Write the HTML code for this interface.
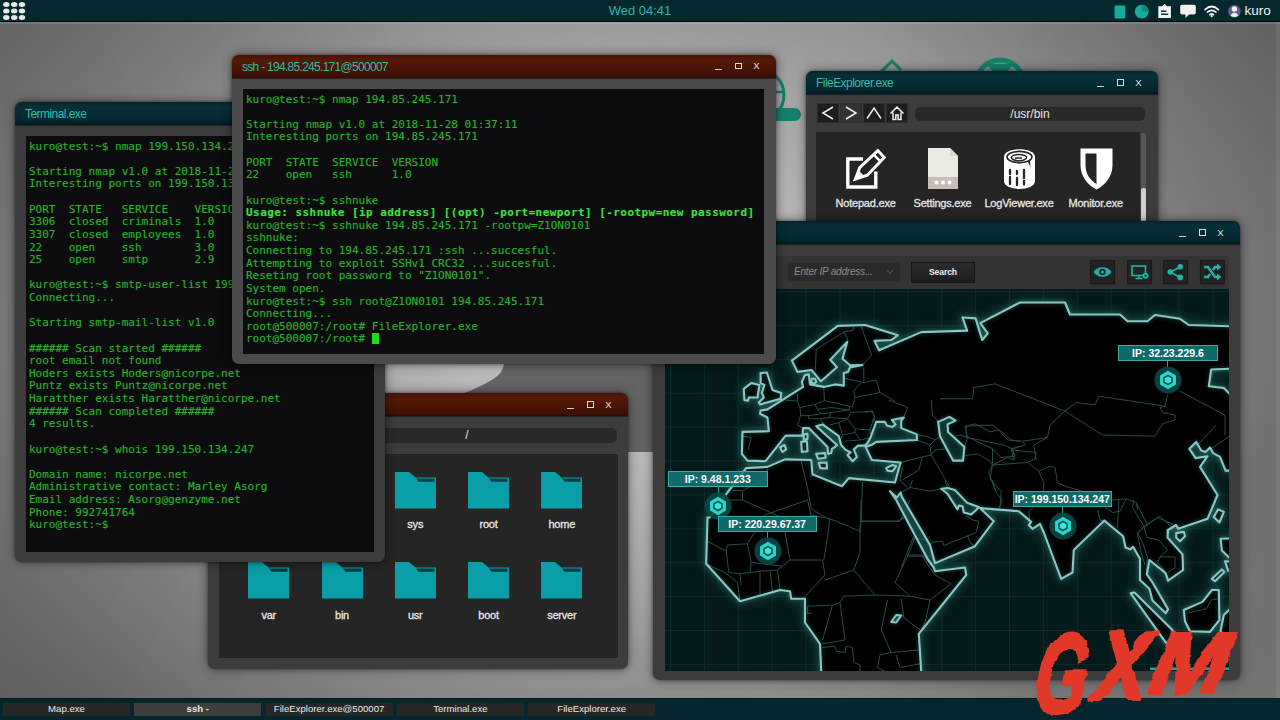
<!DOCTYPE html><html><head><meta charset="utf-8"><title>desktop</title><style>
*{box-sizing:border-box;margin:0;padding:0}
html,body{width:1280px;height:720px;overflow:hidden}
body{position:relative;font-family:"Liberation Sans",sans-serif;background:#6a6a6a;
 background-image:radial-gradient(circle 260px at 1290px 730px,rgba(255,255,255,.15),rgba(255,255,255,0)),linear-gradient(90deg,rgba(0,0,0,0) 68%,rgba(0,0,0,.09) 94%),linear-gradient(270deg,rgba(0,0,0,0) 60%,rgba(0,0,0,.08) 92%),radial-gradient(ellipse 826px 570px at 630px 330px,#c0c0c0 0%,#b9b9b9 21%,#aeaeae 35%,#a0a0a0 49%,#8f8f8f 63%,#828282 74%,#797979 82.5%,#6d6d6d 93%,#686868 100%);}
.abs{position:absolute}
#topbar{position:absolute;left:0;top:0;width:1280px;height:22px;background:#05282f;border-bottom:1px solid #01090b;box-shadow:0 2px 1px rgba(255,255,255,.10);z-index:50}
#clock{position:absolute;left:0;width:1280px;top:3px;text-align:center;color:#2ab5a6;font-size:13px;line-height:16px}
#user{position:absolute;left:1244.5px;top:3.4px;color:#f2f2f2;font-size:13.5px;line-height:16px}
#taskbar{position:absolute;left:0;top:698px;width:1280px;height:22px;background:#05262d;z-index:50;border-top:1px solid #041a1f}
.task{position:absolute;top:4px;height:13px;width:127px;background:#262626;color:#e8e8e8;font-size:9.6px;line-height:12px;text-align:center;white-space:nowrap}
.task.act{background:#3d3d3d;font-weight:bold}
.win{position:absolute;background:#3c3c3c;border-radius:7px;box-shadow:0 0 11px rgba(0,0,0,.48),0 0 3px rgba(0,0,0,.45)}
.tb{position:absolute;left:0;top:0;right:0;height:23px;border-radius:7px 7px 0 0;background:linear-gradient(#02232a,#052f37 18%,#042c34 50%,#03262e 85%,#01181d);color:#33bba8;font-size:12px;line-height:25.2px;padding-left:10px;letter-spacing:-.55px;white-space:nowrap;box-shadow:0 1px 1px rgba(0,0,0,.5)}
.tb.red{background:linear-gradient(#481304,#531906 25%,#4a1405 60%,#3f0f03 88%,#2e0a02)}
.ctl{position:absolute;top:0;right:0;height:23px;width:70px}
.ctl i{position:absolute;display:block}
.ctl .mi{left:9px;top:14.5px;width:6.5px;height:1.4px;background:#d0d0d0}
.ctl .mx{left:29.3px;top:8px;width:6.4px;height:6.8px;border:1.3px solid #dadada}
.ctl .cl{left:47.3px;top:4.5px;font-style:normal;color:#e0e0e0;font-size:9.5px;line-height:14px;letter-spacing:0}
.term{position:absolute;background:#0c0c0e;color:#2ab12a;font-family:"DejaVu Sans Mono","Liberation Mono",monospace;font-size:11px;line-height:12.63px;white-space:pre;overflow:hidden;padding:4.6px 0 0 3px;text-shadow:0 0 1.5px rgba(40,170,40,.35)}
.term b{color:#39e239;font-weight:bold;letter-spacing:.44px}
.cur{display:inline-block;width:7px;height:11px;background:#19e019;vertical-align:-2px}
.addr{position:absolute;background:#292929;border-radius:5px;color:#e4e4e4;font-size:12px;text-align:center}
.panel{position:absolute;background:#252525}
.lbl{position:absolute;width:90px;text-align:center;color:#e6e6e6;font-size:11px;line-height:13px;white-space:nowrap;letter-spacing:-.22px;-webkit-text-stroke:.3px #e6e6e6}
.nb{position:absolute;top:33px;width:20px;height:18px;background:#1e1e1e;box-shadow:0 0 0 1px #2c2c2c}
.iplabel{position:absolute;height:16px;background:rgba(18,120,120,.88);border:1px solid #3aa9a4;color:#fff;font-weight:bold;font-size:10.5px;line-height:14px;text-align:center;white-space:nowrap}
.mbtn{position:absolute;top:40px;width:23px;height:22px;background:#222;box-shadow:0 0 0 1px #1a1a1a,0 1px 2px rgba(0,0,0,.6)}
</style></head><body>
<svg class="abs" style="left:400px;top:330px" width="280" height="130" viewBox="400 330 280 130"><path d="M507,330 Q507,362 501,372 Q496,380 467,392 L420,412 V452 H680 V330 Z" fill="#646464"/></svg>
<div class="abs" style="left:1276px;top:22px;width:4px;height:676px;background:rgba(255,255,255,.07)"></div>
<svg class="abs" style="left:760px;top:40px" width="300" height="100" viewBox="760 40 300 100">
<circle cx="758" cy="95" r="26" fill="none" stroke="#14806c" stroke-width="3"/>
<path d="M732,92 H784" stroke="#14806c" stroke-width="2.5"/>
<rect x="740" y="108" width="61" height="13" rx="6.5" fill="#14806c"/>
<path d="M862,72 h14 v5 h-14z" fill="#14806c"/>
<path d="M881,72 l11,-11 l9,9" fill="none" stroke="#14806c" stroke-width="3"/>
<circle cx="1000" cy="84" r="24" fill="none" stroke="#14806c" stroke-width="5"/>
<path d="M986,64 h28 l-7,8 h-14z" fill="#14806c"/>
</svg>
<div class="win" style="left:806px;top:71px;width:352px;height:200px">
<div class="tb">FileExplorer.exe<div class="ctl"><i class="mi"></i><i class="mx"></i><i class="cl">X</i></div></div>
<svg class="nb" style="left:11.5px;background:#1e1e1e" viewBox="0 0 20 18"><path d="M15,3 L5,9 L15,15" fill="none" stroke="#f0f0f0" stroke-width="1.5"/></svg>
<svg class="nb" style="left:34.5px;background:#333" viewBox="0 0 20 18"><path d="M5,3 L15,9 L5,15" fill="none" stroke="#f0f0f0" stroke-width="1.5"/></svg>
<svg class="nb" style="left:57.5px;background:#1e1e1e" viewBox="0 0 20 18"><path d="M3,14.5 L10,4 L17,14.5" fill="none" stroke="#f0f0f0" stroke-width="1.5"/></svg>
<svg class="nb" style="left:80.5px;background:#1e1e1e" viewBox="0 0 20 18"><path d="M3.5,9.5 L10,3 L16.5,9.5 M6,8.5 V15.5 H8.8 V11 H11.2 V15.5 H14 V8.5" fill="none" stroke="#f0f0f0" stroke-width="1.5"/></svg>
<div class="addr" style="left:109px;top:35.5px;width:230px;height:14px;line-height:14px">/usr/bin</div>
<div class="panel" style="left:10px;top:61px;width:324px;height:120px"></div>
<div class="abs" style="left:335px;top:62px;width:5px;height:110px;background:#555;border-radius:2px"></div>
<div class="abs" style="left:335px;top:117px;width:5px;height:50px;background:#d0d0d0;border-radius:2px"></div>
<svg class="abs" style="left:39px;top:77px" width="44" height="44" viewBox="0 0 44 44">
<path d="M18,11 H2.8 V39 H30.8 V23.5" fill="none" stroke="#fff" stroke-width="3.4"/>
<path d="M10.3,31.2 L14.8,19.5 L32.8,2.6 L39.2,9.6 L22.3,27.3 Z" fill="#252525" stroke="#fff" stroke-width="3" stroke-linejoin="miter"/>
<path d="M28.7,6.6 L35.6,13.6" stroke="#fff" stroke-width="2.6"/>
<path d="M9.5,32.2 L13.8,22.5 L19.6,28.6 Z" fill="#fff"/>
</svg>
<div class="lbl" style="left:14.6px;top:125.6px">Notepad.exe</div>
<svg class="abs" style="left:122px;top:77.4px" width="30" height="41" viewBox="0 0 30 41">
<path d="M0,0 H22 L30,8 V41 H0 Z" fill="#eceae3"/><path d="M22,0 L30,8 H22 Z" fill="#d9d6cc"/>
<rect x="0" y="29" width="30" height="12" fill="#c9bdb9"/>
<circle cx="8.5" cy="34.5" r="2" fill="#fff"/><circle cx="15" cy="34.5" r="2" fill="#fff"/><circle cx="21.5" cy="34.5" r="2" fill="#fff"/>
</svg>
<div class="lbl" style="left:91.5px;top:125.6px">Settings.exe</div>
<svg class="abs" style="left:197px;top:77px" width="33" height="42" viewBox="0 0 33 42">
<path d="M1,9 C1,-1.5 32,-1.5 32,9 V33 C32,43.5 1,43.5 1,33 Z" fill="#fff"/>
<ellipse cx="16.5" cy="9" rx="12.5" ry="5.6" fill="none" stroke="#252525" stroke-width="1.6"/>
<ellipse cx="16" cy="9.6" rx="7.6" ry="3.1" fill="none" stroke="#252525" stroke-width="1.5"/>
<path d="M12,10 h7" stroke="#252525" stroke-width="1.5"/>
<path d="M25,14 l2,-3 l0.5,8z" fill="#252525"/>
<path d="M7,22 v4 M7,29 v7 M14,23 v3 M14,30 v7 M21,22 v8 M21,33 v3.5" stroke="#252525" stroke-width="2.3" stroke-linecap="round"/>
</svg>
<div class="lbl" style="left:168px;top:125.6px">LogViewer.exe</div>
<svg class="abs" style="left:273.5px;top:76.5px" width="33" height="42" viewBox="0 0 33 42">
<path d="M0.5,0.5 H32.5 V17 C32.5,29 25,37 16.5,41.5 C8,37 0.5,29 0.5,17 Z" fill="#fff"/>
<path d="M5.5,5.5 H16.5 V36 C10,32 5.5,26 5.5,17 Z" fill="#252525"/>
</svg>
<div class="lbl" style="left:244.7px;top:125.6px">Monitor.exe</div>
</div>
<div class="win" style="left:208px;top:393px;width:420px;height:276px">
<div class="tb red"><div class="ctl"><i class="mi"></i><i class="mx"></i><i class="cl">X</i></div></div>
<div class="addr" style="left:109.3px;top:35px;width:299.4px;height:14.5px;line-height:14px">/</div>
<div class="panel" style="left:10.5px;top:61px;width:399.5px;height:204px"></div>
<svg class="abs" style="left:40.2px;top:78.7px" width="41" height="37" viewBox="0 0 41 37"><path d="M0,0 H14 L20.5,5.5 H41 V36.5 H0 Z" fill="#0a9fa8"/><path d="M21,6.5 H39.5 V9.8 H23.5 Z" fill="#063c42"/></svg>
<div class="lbl" style="left:15.75px;top:125.2px"></div>
<svg class="abs" style="left:113.5px;top:78.7px" width="41" height="37" viewBox="0 0 41 37"><path d="M0,0 H14 L20.5,5.5 H41 V36.5 H0 Z" fill="#0a9fa8"/><path d="M21,6.5 H39.5 V9.8 H23.5 Z" fill="#063c42"/></svg>
<div class="lbl" style="left:89px;top:125.2px"></div>
<svg class="abs" style="left:186.8px;top:78.7px" width="41" height="37" viewBox="0 0 41 37"><path d="M0,0 H14 L20.5,5.5 H41 V36.5 H0 Z" fill="#0a9fa8"/><path d="M21,6.5 H39.5 V9.8 H23.5 Z" fill="#063c42"/></svg>
<div class="lbl" style="left:162.25px;top:125.2px">sys</div>
<svg class="abs" style="left:260.0px;top:78.7px" width="41" height="37" viewBox="0 0 41 37"><path d="M0,0 H14 L20.5,5.5 H41 V36.5 H0 Z" fill="#0a9fa8"/><path d="M21,6.5 H39.5 V9.8 H23.5 Z" fill="#063c42"/></svg>
<div class="lbl" style="left:235.5px;top:125.2px">root</div>
<svg class="abs" style="left:333.2px;top:78.7px" width="41" height="37" viewBox="0 0 41 37"><path d="M0,0 H14 L20.5,5.5 H41 V36.5 H0 Z" fill="#0a9fa8"/><path d="M21,6.5 H39.5 V9.8 H23.5 Z" fill="#063c42"/></svg>
<div class="lbl" style="left:308.75px;top:125.2px">home</div>
<svg class="abs" style="left:40.2px;top:169px" width="41" height="37" viewBox="0 0 41 37"><path d="M0,0 H14 L20.5,5.5 H41 V36.5 H0 Z" fill="#0a9fa8"/><path d="M21,6.5 H39.5 V9.8 H23.5 Z" fill="#063c42"/></svg>
<div class="lbl" style="left:15.75px;top:215.5px">var</div>
<svg class="abs" style="left:113.5px;top:169px" width="41" height="37" viewBox="0 0 41 37"><path d="M0,0 H14 L20.5,5.5 H41 V36.5 H0 Z" fill="#0a9fa8"/><path d="M21,6.5 H39.5 V9.8 H23.5 Z" fill="#063c42"/></svg>
<div class="lbl" style="left:89px;top:215.5px">bin</div>
<svg class="abs" style="left:186.8px;top:169px" width="41" height="37" viewBox="0 0 41 37"><path d="M0,0 H14 L20.5,5.5 H41 V36.5 H0 Z" fill="#0a9fa8"/><path d="M21,6.5 H39.5 V9.8 H23.5 Z" fill="#063c42"/></svg>
<div class="lbl" style="left:162.25px;top:215.5px">usr</div>
<svg class="abs" style="left:260.0px;top:169px" width="41" height="37" viewBox="0 0 41 37"><path d="M0,0 H14 L20.5,5.5 H41 V36.5 H0 Z" fill="#0a9fa8"/><path d="M21,6.5 H39.5 V9.8 H23.5 Z" fill="#063c42"/></svg>
<div class="lbl" style="left:235.5px;top:215.5px">boot</div>
<svg class="abs" style="left:333.2px;top:169px" width="41" height="37" viewBox="0 0 41 37"><path d="M0,0 H14 L20.5,5.5 H41 V36.5 H0 Z" fill="#0a9fa8"/><path d="M21,6.5 H39.5 V9.8 H23.5 Z" fill="#063c42"/></svg>
<div class="lbl" style="left:308.75px;top:215.5px">server</div>
</div>
<div class="win" style="left:15px;top:102px;width:370px;height:460px">
<div class="tb">Terminal.exe</div>
<div class="term" style="left:11px;top:34px;width:348px;height:416px">kuro@test:~$ nmap 199.150.134.247

Starting nmap v1.0 at 2018-11-28 01:36:02
Interesting ports on 199.150.134.247

PORT  STATE   SERVICE    VERSION
3306  closed  criminals  1.0
3307  closed  employees  1.0
22    open    ssh        3.0
25    open    smtp       2.9

kuro@test:~$ smtp-user-list 199.150.134.247
Connecting...

Starting smtp-mail-list v1.0

###### Scan started ######
root email not found
Hoders exists Hoders@nicorpe.net
Puntz exists Puntz@nicorpe.net
Haratther exists Haratther@nicorpe.net
###### Scan completed ######
4 results.

kuro@test:~$ whois 199.150.134.247

Domain name: nicorpe.net
Administrative contact: Marley Asorg
Email address: Asorg@genzyme.net
Phone: 992741764
kuro@test:~$ </div>
</div>
<div class="win" style="left:653px;top:221px;width:587px;height:459px">
<div class="tb"><div class="ctl"><i class="mi"></i><i class="mx"></i><i class="cl">X</i></div></div>
<div class="abs" style="left:8px;top:35px;width:568px;height:33px;background:#343434"></div>
<div class="abs" style="left:135px;top:42px;width:112px;height:18px;background:#2a2a2a;border-radius:3px;color:#8a8a8a;font-style:italic;font-size:10px;line-height:18px;padding-left:6px;letter-spacing:-.2px">Enter IP address...</div>
<svg class="abs" style="left:233px;top:48px" width="8" height="6" viewBox="0 0 8 6"><path d="M1,1 L4,4.5 L7,1" fill="none" stroke="#4a4a4a" stroke-width="1.3"/></svg>
<div class="abs" style="left:259px;top:41.5px;width:62px;height:19px;background:linear-gradient(#2c2c2c,#1c1c1c);box-shadow:0 0 0 1px #161616;color:#f0f0f0;font-size:8.6px;line-height:19px;text-align:center;font-weight:bold;letter-spacing:-.1px">Search</div>
<svg class="mbtn" style="left:437.8px" viewBox="0 0 23 22"><path d="M2.5,11 C6,4.6 17,4.6 20.5,11 C17,17.4 6,17.4 2.5,11 Z" fill="#1fb5a6"/><circle cx="11.5" cy="11" r="3.3" fill="#222"/><circle cx="11.5" cy="11" r="1.5" fill="#1fb5a6"/></svg>
<svg class="mbtn" style="left:474.5px" viewBox="0 0 23 22"><rect x="4" y="5" width="13.5" height="9.5" fill="none" stroke="#1fb5a6" stroke-width="1.6"/><path d="M7.5,17.5 h7 M11,14.5 v3" stroke="#1fb5a6" stroke-width="1.5"/><circle cx="17.5" cy="14.8" r="3" fill="#1fb5a6"/><circle cx="17.5" cy="14.8" r="1.1" fill="#222"/></svg>
<svg class="mbtn" style="left:511.4px" viewBox="0 0 23 22"><path d="M6.5,11 L16,6 M6.5,11 L16,16.5" stroke="#1fb5a6" stroke-width="1.7"/><circle cx="6.3" cy="11" r="2.8" fill="#1fb5a6"/><circle cx="16.2" cy="5.8" r="2.8" fill="#1fb5a6"/><circle cx="16.2" cy="16.4" r="2.8" fill="#1fb5a6"/></svg>
<svg class="mbtn" style="left:547.6px" viewBox="0 0 23 22"><path d="M3,6 H7 L14,16 H17 M3,16 H7 L9,13 M12,9 L14,6 H17" fill="none" stroke="#1fb5a6" stroke-width="2.3"/><path d="M16,2.5 L20.5,6 L16,9.5 Z M16,12.5 L20.5,16 L16,19.5 Z" fill="#1fb5a6"/></svg>
<svg class="abs" style="left:12px;top:68px" width="564" height="382" viewBox="665 289 564 382">
<defs><filter id="gl" x="-5%" y="-5%" width="110%" height="110%"><feGaussianBlur stdDeviation="2.2"/></filter><filter id="gl2" x="-5%" y="-5%" width="110%" height="110%"><feGaussianBlur stdDeviation="5"/></filter></defs>
<rect x="665" y="289" width="564" height="382" fill="#051a1a"/>
<path d="M670.5,289 V671 M704.4,289 V671 M738.3,289 V671 M772.2,289 V671 M806.1,289 V671 M840,289 V671 M873.9,289 V671 M907.8,289 V671 M941.7,289 V671 M975.6,289 V671 M1009.5,289 V671 M1043.4,289 V671 M1077.3,289 V671 M1111.2,289 V671 M1145.1,289 V671 M1179,289 V671 M1212.9,289 V671 M665,291.5 H1229 M665,325.4 H1229 M665,359.3 H1229 M665,393.2 H1229 M665,427.1 H1229 M665,461 H1229 M665,494.9 H1229 M665,528.8 H1229 M665,562.7 H1229 M665,596.6 H1229 M665,630.5 H1229 M665,664.4 H1229" stroke="#0b2c2b" stroke-width="1" fill="none"/>
<path d="M765.6,461.2 L747.5,460.6 L741.9,453.8 L742.5,431.9 L768.8,431.2 L767.5,417.5 L760,413.8 L760.6,410.6 L767.5,409.4 L803.1,386.9 L801.9,381.9 L805,375 L808.8,374.4 L810,384.4 L823.8,386.9 L835,384.4 L843.8,385.6 L843.8,373.1 L848.1,371.9 L850,367.5 L862.5,365 L850,365.3 L842.5,358.8 L847.2,341.9 L830.3,359.7 L836.9,367.2 L820.9,381.3 L811.6,370 L797.5,371.9 L791.9,360.6 L837.8,325.9 L865,325 L897.8,335.3 L891.3,340 L874.4,340.9 L879.1,350.3 L921.3,332.1 L967.2,330.6 L962.5,317.5 L975.6,318.4 L982.2,340 L987.8,333.4 L980.3,323.1 L1020,302.5 L1065,302.5 L1070,314.5 L1120,314.5 L1127.5,321.2 L1147.5,321.2 L1155,315 L1180,318.8 L1188.8,325 L1229.5,326.2 L1250,326 L1250,368.8 L1229.5,368.8 L1211.2,369.5 L1208.8,386.2 L1223.8,388 L1229.5,393.8 L1250,394 L1250,470.6 L1229.1,470.6 L1225.6,470.6 L1220,456.9 L1213.1,453.1 L1210,447.5 L1205.6,451.9 L1201.2,450.6 L1196.2,441.9 L1189.4,448.8 L1195.6,458.1 L1207.5,456.2 L1200,466.9 L1217.5,495 L1207.5,518.8 L1178.1,528.8 L1176.2,525 L1168.1,530 L1167.5,537.5 L1182.5,554.4 L1183.1,570 L1168.1,580.6 L1165.6,573.1 L1149.4,560 L1146.9,574.4 L1152.5,582.5 L1168.1,609.4 L1165.6,613.1 L1152.5,600.6 L1149.4,588.8 L1140,580 L1140,558.8 L1133.1,546.9 L1130,549.4 L1125.6,547.5 L1123.1,536.2 L1104.4,520.6 L1073.8,550 L1072.5,572.5 L1061.2,578.8 L1043.8,532.5 L1040,523.8 L1032.5,528.8 L1028.8,525 L1031.2,521.9 L1018.8,511.2 L980,508.1 L993.8,521.2 L975,546.2 L935,563.1 L930,545 L901.9,496.9 L900.6,492.5 L896.9,497.5 L890,491.2 L896.2,500 L928.1,560 L933.8,567.5 L935,571.2 L965,567.5 L966.2,575 L918.8,633.8 L921.2,671.2 L921,700 L821,700 L821.2,671.2 L820,643.8 L805,622.5 L805,598.8 L791.2,598.8 L790,591.2 L780,590 L740,601.2 L706.2,563.8 L707.5,517.5 L710,517.5 L727.5,492.5 L746.2,468.1 L767.5,466.9 L785,459.4 L811.2,460 L812.5,474.4 L841.9,486.2 L848.8,478.1 L895,482.5 L900.6,462.5 L871.9,460 L865.6,446.9 L872.5,444.4 L876.2,441.9 L916.9,440 L916.9,434.4 L901.2,428.1 L901.2,420.6 L903.8,417.5 L891.9,420 L895.6,424.4 L892.5,426.9 L886.9,425.6 L885,421.9 L876.2,421.9 L870.6,437.5 L867.5,443.1 L865,445.6 L858.1,445.6 L853.8,449.4 L856.9,456.9 L852.5,461.2 L847.5,455 L850.6,452.5 L845,449.4 L841.2,445 L838.8,436.2 L822.5,424.4 L816.2,426.2 L836.9,445 L835,446.9 L831.9,448.8 L831.2,453.1 L828.1,453.8 L827.5,446.9 L808.8,428.1 L803.1,428.1 L802.5,435.6 L785.6,435.6 Z M743.8,388.8 L751.2,383.1 L759.4,385 L757.5,397.5 L748.8,397.5 L748.1,400.6 L744.4,400 Z M760.6,373.1 L766.9,372.5 L772.5,390 L781.2,393.1 L780.6,398.8 L760,404.4 L758.8,402.5 L763.8,397.5 L761.9,392.5 L764.4,385 L760.6,383.1 Z M811.9,378.8 L815,378.8 L816.2,381.9 L813.8,383.8 L811.2,381.9 Z M801.2,441.9 L806.9,441.2 L807.5,451.2 L801.9,451.9 Z M803.8,434.4 L807.5,433.8 L807.5,438.8 L803.8,440 Z M780,447.5 L784.4,445 L786.2,449.4 L782.5,451.9 Z M816.2,453.8 L825.2,453.1 L825.6,457.8 L818.1,458.8 Z M818.8,462.8 L826.6,462.5 L826.9,468.5 L820.4,468.1 Z M886.2,468.1 L892.5,465 L896.2,466.2 L892.5,471.2 L887.5,470.6 Z M1218.1,509.4 L1223.8,511.9 L1219.4,522.5 L1213.8,516.9 Z M1176.2,533.1 L1183.8,531.9 L1185,536.2 L1180,541.2 L1176.2,537.5 Z M1220.6,538.8 L1240,538.1 L1240,557.5 L1229.1,557.5 L1221.9,550.6 Z M1225,561.2 L1240,562.5 L1240,571.9 L1228.1,570.6 Z M1211.9,578.8 L1221.9,569.4 L1224.4,571.9 L1215,581.2 Z M1130.6,593.1 L1134.4,592.5 L1172.5,630 L1172.5,638.8 L1166.2,643.1 Z M1183.8,610 L1202.5,601.9 L1211.9,590 L1218.8,590 L1219.4,620 L1210,631.9 L1190,631.2 L1185,621.2 Z M1240,602.5 L1229.1,610 L1223.8,615 L1220.6,630.6 L1221.9,638.8 L1240,640 Z M938.1,421.9 L949.4,416.9 L955.6,420.6 L947.5,424.4 L948.1,431.9 L964.4,446.9 L963.1,460.6 L953.1,460.6 L940,436.2 Z M941.2,488.8 L947.5,488.1 L955,490 L967.5,503.1 L978.8,506.9 L976.2,510 L971.2,514.4 L963.8,512.5 L962.5,506.2 L958.8,505.6 L957.5,509.4 L947.5,493.8 Z M891.2,622 L896.2,615 L901.2,615.5 L896.2,622.5 Z" fill="none" stroke="#2f8f8a" stroke-width="8" stroke-linejoin="round" opacity=".24" filter="url(#gl2)"/>
<path d="M765.6,461.2 L747.5,460.6 L741.9,453.8 L742.5,431.9 L768.8,431.2 L767.5,417.5 L760,413.8 L760.6,410.6 L767.5,409.4 L803.1,386.9 L801.9,381.9 L805,375 L808.8,374.4 L810,384.4 L823.8,386.9 L835,384.4 L843.8,385.6 L843.8,373.1 L848.1,371.9 L850,367.5 L862.5,365 L850,365.3 L842.5,358.8 L847.2,341.9 L830.3,359.7 L836.9,367.2 L820.9,381.3 L811.6,370 L797.5,371.9 L791.9,360.6 L837.8,325.9 L865,325 L897.8,335.3 L891.3,340 L874.4,340.9 L879.1,350.3 L921.3,332.1 L967.2,330.6 L962.5,317.5 L975.6,318.4 L982.2,340 L987.8,333.4 L980.3,323.1 L1020,302.5 L1065,302.5 L1070,314.5 L1120,314.5 L1127.5,321.2 L1147.5,321.2 L1155,315 L1180,318.8 L1188.8,325 L1229.5,326.2 L1250,326 L1250,368.8 L1229.5,368.8 L1211.2,369.5 L1208.8,386.2 L1223.8,388 L1229.5,393.8 L1250,394 L1250,470.6 L1229.1,470.6 L1225.6,470.6 L1220,456.9 L1213.1,453.1 L1210,447.5 L1205.6,451.9 L1201.2,450.6 L1196.2,441.9 L1189.4,448.8 L1195.6,458.1 L1207.5,456.2 L1200,466.9 L1217.5,495 L1207.5,518.8 L1178.1,528.8 L1176.2,525 L1168.1,530 L1167.5,537.5 L1182.5,554.4 L1183.1,570 L1168.1,580.6 L1165.6,573.1 L1149.4,560 L1146.9,574.4 L1152.5,582.5 L1168.1,609.4 L1165.6,613.1 L1152.5,600.6 L1149.4,588.8 L1140,580 L1140,558.8 L1133.1,546.9 L1130,549.4 L1125.6,547.5 L1123.1,536.2 L1104.4,520.6 L1073.8,550 L1072.5,572.5 L1061.2,578.8 L1043.8,532.5 L1040,523.8 L1032.5,528.8 L1028.8,525 L1031.2,521.9 L1018.8,511.2 L980,508.1 L993.8,521.2 L975,546.2 L935,563.1 L930,545 L901.9,496.9 L900.6,492.5 L896.9,497.5 L890,491.2 L896.2,500 L928.1,560 L933.8,567.5 L935,571.2 L965,567.5 L966.2,575 L918.8,633.8 L921.2,671.2 L921,700 L821,700 L821.2,671.2 L820,643.8 L805,622.5 L805,598.8 L791.2,598.8 L790,591.2 L780,590 L740,601.2 L706.2,563.8 L707.5,517.5 L710,517.5 L727.5,492.5 L746.2,468.1 L767.5,466.9 L785,459.4 L811.2,460 L812.5,474.4 L841.9,486.2 L848.8,478.1 L895,482.5 L900.6,462.5 L871.9,460 L865.6,446.9 L872.5,444.4 L876.2,441.9 L916.9,440 L916.9,434.4 L901.2,428.1 L901.2,420.6 L903.8,417.5 L891.9,420 L895.6,424.4 L892.5,426.9 L886.9,425.6 L885,421.9 L876.2,421.9 L870.6,437.5 L867.5,443.1 L865,445.6 L858.1,445.6 L853.8,449.4 L856.9,456.9 L852.5,461.2 L847.5,455 L850.6,452.5 L845,449.4 L841.2,445 L838.8,436.2 L822.5,424.4 L816.2,426.2 L836.9,445 L835,446.9 L831.9,448.8 L831.2,453.1 L828.1,453.8 L827.5,446.9 L808.8,428.1 L803.1,428.1 L802.5,435.6 L785.6,435.6 Z M743.8,388.8 L751.2,383.1 L759.4,385 L757.5,397.5 L748.8,397.5 L748.1,400.6 L744.4,400 Z M760.6,373.1 L766.9,372.5 L772.5,390 L781.2,393.1 L780.6,398.8 L760,404.4 L758.8,402.5 L763.8,397.5 L761.9,392.5 L764.4,385 L760.6,383.1 Z M811.9,378.8 L815,378.8 L816.2,381.9 L813.8,383.8 L811.2,381.9 Z M801.2,441.9 L806.9,441.2 L807.5,451.2 L801.9,451.9 Z M803.8,434.4 L807.5,433.8 L807.5,438.8 L803.8,440 Z M780,447.5 L784.4,445 L786.2,449.4 L782.5,451.9 Z M816.2,453.8 L825.2,453.1 L825.6,457.8 L818.1,458.8 Z M818.8,462.8 L826.6,462.5 L826.9,468.5 L820.4,468.1 Z M886.2,468.1 L892.5,465 L896.2,466.2 L892.5,471.2 L887.5,470.6 Z M1218.1,509.4 L1223.8,511.9 L1219.4,522.5 L1213.8,516.9 Z M1176.2,533.1 L1183.8,531.9 L1185,536.2 L1180,541.2 L1176.2,537.5 Z M1220.6,538.8 L1240,538.1 L1240,557.5 L1229.1,557.5 L1221.9,550.6 Z M1225,561.2 L1240,562.5 L1240,571.9 L1228.1,570.6 Z M1211.9,578.8 L1221.9,569.4 L1224.4,571.9 L1215,581.2 Z M1130.6,593.1 L1134.4,592.5 L1172.5,630 L1172.5,638.8 L1166.2,643.1 Z M1183.8,610 L1202.5,601.9 L1211.9,590 L1218.8,590 L1219.4,620 L1210,631.9 L1190,631.2 L1185,621.2 Z M1240,602.5 L1229.1,610 L1223.8,615 L1220.6,630.6 L1221.9,638.8 L1240,640 Z" fill="#000"/>
<path d="M938.1,421.9 L949.4,416.9 L955.6,420.6 L947.5,424.4 L948.1,431.9 L964.4,446.9 L963.1,460.6 L953.1,460.6 L940,436.2 Z M941.2,488.8 L947.5,488.1 L955,490 L967.5,503.1 L978.8,506.9 L976.2,510 L971.2,514.4 L963.8,512.5 L962.5,506.2 L958.8,505.6 L957.5,509.4 L947.5,493.8 Z M891.2,622 L896.2,615 L901.2,615.5 L896.2,622.5 Z" fill="#082726"/>
<g id="borders" fill="none" stroke="#284d4a" stroke-width="1" stroke-linejoin="round"><path d="M807.5,500 L811.2,515 L830,518.8 L827.5,537.5 L823.8,560 M706.2,563.8 L713.8,567.5 L725,572.5 L737.5,582.5 L740,601.2 M707.5,541.2 L726.2,551.2 L727.5,545 L747.5,543.8 M726.2,551.2 L728.8,572.5 L740,573.8 L741.2,585 M750,572.5 L751.2,562.5 L782.5,566.2 L790,560 L822.5,560 M760,571.2 L760,593.8 M770,571.2 L772.5,591.2 M777.5,570 L780,590 M740,573.8 L750,572.5 L760,571.2 L777.5,570 L782.5,566.2 M822.5,560 L825,575 L803.8,597.5 M830,518.8 L860,531.2 L861.2,500 M860,531.2 L860,552.5 L853.8,570 L825,580 M861.2,521.2 L900,521.2 L910,500 M853.8,570 L875,595 L843.8,596.2 L840,602.5 L832.5,605 L807.5,606.2 M875,595 L910,596.2 L895,582.5 L907.5,556.2 L922.5,556.2 L928.8,566.2 M907.5,556.2 L915,537.5 L925,540 M910,596.2 L930,600 L951.2,583.8 L935,575 L928.8,566.2 M930,600 L925,622.5 L918.8,633.8 M887.5,600 L881.2,630 L891.2,652.5 L918.8,650 M901.2,598.8 L903.8,617.5 L920,630 M840,602.5 L845,640 L822.5,643.8 M832.5,605 L822.5,640 M822.5,647.5 L835,646.2 L836.2,651.2 L845,652.5 L846.2,646.2 L852.5,647.5 L853.8,662.5 L860,665 L860,671.2 M891.2,652.5 L880,655 L877.5,667.5 L885,671.2 M896.2,655 L900,667.5 L920,663.8 M807.5,606.2 L807.5,613.8 L812.5,612.5 M747.5,543.8 L765,515 L807.5,500 M747.5,543.8 L751.2,562.5 M790,560 L785,532.5 L811.2,515 M801.2,461.2 L807.5,487.5 L811.2,508.8 L830,520 M810,477.5 L820,468.8 L816.2,462.5 M862.5,482 L861.2,521.2 L860,532.5 M732.5,490.5 L742.5,490.5 L742.5,500 L727.5,500 L726.2,507.5 L713.8,508.8 M742.5,490.5 L765,478.8 L767.5,468.8 M742.5,500 L810,530 M901.2,492.5 L910,487.5 L912.5,480 M910,487.5 L930,491.2 L941.2,488.8 M947.5,488.1 L945,480 M930,545 L932.5,541.9 L942.5,541.2 L943.8,545.6 L976.2,532.5 L978.8,521.2 L972.5,520 L966.2,516.2 M967.5,535 L970,542.5 L975,546.2 M992.5,480 L996.2,492.5 L1002.5,501.2 L998.8,508.1 M860,521.2 L897.5,521.2 L903.8,517.5 M913.8,536.2 L901.2,567.5 M907.5,555 L922.5,555 L928.1,560 M916.9,434.4 L930,437.5 L935,440 L940,436.2 M916.9,440 L930,445 L935,440 M930,445 L931.2,455 L922.5,456.9 L900.6,462.5 M931.2,455 L950,487.5 M931.2,455 L935,450 L946.2,448.8 M922.5,456.9 L918.8,470 L902.5,480 M902.5,467.5 L900,480 L907.5,487.5 M964.4,446.9 L967.5,437.5 L960,435 L955,436.2 M966.2,426.2 L975,423.8 L990,431.9 L998.8,430 L1007.5,440 L1020,441.2 M966.2,426.2 L966.2,437.5 M965.6,455.6 L977.5,453.8 L990,461.2 L992.5,465 L1007.5,457.5 L1013.8,460 L1011.2,448.8 L1020,446.2 M992.5,465 L988.8,472.5 L995,490 M931.2,400 L932.5,415 L938.1,421.2 M888.8,400 L907.5,407.5 L903.8,417.5 M865,411.9 L871.9,411.2 L874.4,416.2 L871.9,421.9 M940,398.8 L972.5,398.8 L973.8,387.5 L995,383.8 L1065,411.2 L1076.2,402.5 L1095,405 L1098.8,396.2 L1165,406.2 L1167.5,395 M1065,411.2 L1050,425 L1047.5,437.5 L1033.8,445 L1036.2,460 M1065,411.2 L1102.5,435 L1155,436.2 L1162.5,423.8 L1175,420 L1175,415 L1162.5,412.5 L1160,407.5 L1165,406.2 M1180,391.2 L1225,415 L1225,435 M965,426.2 L992.5,425 L1002.5,432.5 L1011.2,440 L1022.5,441.2 L1025,445 L1012.5,448.8 L1015,458.8 M965,426.2 L967.5,437.5 L1003.8,445 L1012.5,448.8 M1022.5,441.2 L1047.5,437.5 M966.2,436.2 L992.5,448.8 L1001.2,457.5 L1015,456.2 L1012.5,450 L1036.2,452.5 L1035,458.8 L1027.5,462.5 M992.5,465 L1027.5,462.5 L1038.8,471.2 L1050,466.2 L1055,467.5 L1057.5,482.5 L1065,486.2 L1112.5,500 L1126.2,498.8 L1136.2,502.5 L1137.5,510 M992.5,448.8 L992.5,465 L990,478.8 L1001.2,491.2 L1000,507.5 M1038.8,471.2 L1043.8,482.5 L1042.5,500 L1028.8,511.2 L1030,523.8 M1097.5,510 L1100,520 L1103.8,521.2 M1105,507.5 L1112.5,512.5 L1120,511.2 L1126.2,498.8 M1136.2,502.5 L1147.5,525 L1157.5,517.5 L1180,527.5 L1166.2,530 L1168.8,540 M1147.5,525 L1137.5,532.5 L1142.5,542.5 L1147.5,557.5 L1146.2,575 M1216.2,425 L1200,442.5 L1190,448.8 M1211.2,448.8 L1229.5,436.2 M1133.8,500 L1132.5,507.5 L1143.8,526.2 L1137.5,533.8 L1141.2,552.5 L1145,565 M1143.8,526.2 L1160,516.2 L1171.2,526.9 M1143.8,526.2 L1146.9,537.5 L1158.8,540 L1167.5,550 L1160,556.9 L1157.5,562.5 L1165,571.2 M1160,556.9 L1175,556.9 L1175,567.5 L1168.1,572.5 M1118.8,500 L1117.5,527.5 M785,400 L797.5,401.2 L800,407.5 L800.6,415.6 L797.5,425 L803.1,428.1 M797.5,393.8 L797.5,401.2 M823.8,386.9 L824.4,400.6 M800,407.5 L815,404.4 L824.4,400.6 L852.5,406.9 L855,397.5 L853.8,391.2 L861.2,382.5 M815,404.4 L817.5,409.4 L831.2,407.5 L848.8,410 L850,406.9 M817.5,409.4 L821.2,413.8 L808.8,415.6 L800.6,415.6 M821.2,413.8 L831.2,412.5 L848.8,410 M831.2,412.5 L828.8,417.5 L820,418.8 L808.8,418.8 L808.1,415.6 M828.8,417.5 L847.5,418.8 L851.2,412.5 L872.5,411.2 M847.5,418.8 L855,428.8 L870,430 L872.5,422.5 L875,418.8 L872.5,411.2 L865,411.9 M843.8,378.1 L863.8,382.5 L863.8,367.5 M863.8,382.5 L876.2,380 L880,392.5 L895,401.2 M855,397.5 L880,392.5 M820,418.8 L825,425 M830,425 L838.8,422.5 L842.5,435 L840,441.2 M838.8,422.5 L847.5,418.8 M842.5,435 L855,432.5 L855,428.8 M855,432.5 L860,440 L871.2,437.5 L870,430 M845,441.2 L860,440 M742.5,436.2 L751.2,437.5 L748.1,450 M816.3,349.4 L815.3,370 M816.3,349.4 L844.4,331.6 L852.8,330.6 L853.8,326.9 M844.4,331.6 L848.1,340.9 M861.3,326.9 L871.6,355 L863.1,364.4 M1187.5,613.1 L1206.2,608.8 L1211.2,600 L1217.5,598.8"/></g>
<path d="M765.6,461.2 L747.5,460.6 L741.9,453.8 L742.5,431.9 L768.8,431.2 L767.5,417.5 L760,413.8 L760.6,410.6 L767.5,409.4 L803.1,386.9 L801.9,381.9 L805,375 L808.8,374.4 L810,384.4 L823.8,386.9 L835,384.4 L843.8,385.6 L843.8,373.1 L848.1,371.9 L850,367.5 L862.5,365 L850,365.3 L842.5,358.8 L847.2,341.9 L830.3,359.7 L836.9,367.2 L820.9,381.3 L811.6,370 L797.5,371.9 L791.9,360.6 L837.8,325.9 L865,325 L897.8,335.3 L891.3,340 L874.4,340.9 L879.1,350.3 L921.3,332.1 L967.2,330.6 L962.5,317.5 L975.6,318.4 L982.2,340 L987.8,333.4 L980.3,323.1 L1020,302.5 L1065,302.5 L1070,314.5 L1120,314.5 L1127.5,321.2 L1147.5,321.2 L1155,315 L1180,318.8 L1188.8,325 L1229.5,326.2 L1250,326 L1250,368.8 L1229.5,368.8 L1211.2,369.5 L1208.8,386.2 L1223.8,388 L1229.5,393.8 L1250,394 L1250,470.6 L1229.1,470.6 L1225.6,470.6 L1220,456.9 L1213.1,453.1 L1210,447.5 L1205.6,451.9 L1201.2,450.6 L1196.2,441.9 L1189.4,448.8 L1195.6,458.1 L1207.5,456.2 L1200,466.9 L1217.5,495 L1207.5,518.8 L1178.1,528.8 L1176.2,525 L1168.1,530 L1167.5,537.5 L1182.5,554.4 L1183.1,570 L1168.1,580.6 L1165.6,573.1 L1149.4,560 L1146.9,574.4 L1152.5,582.5 L1168.1,609.4 L1165.6,613.1 L1152.5,600.6 L1149.4,588.8 L1140,580 L1140,558.8 L1133.1,546.9 L1130,549.4 L1125.6,547.5 L1123.1,536.2 L1104.4,520.6 L1073.8,550 L1072.5,572.5 L1061.2,578.8 L1043.8,532.5 L1040,523.8 L1032.5,528.8 L1028.8,525 L1031.2,521.9 L1018.8,511.2 L980,508.1 L993.8,521.2 L975,546.2 L935,563.1 L930,545 L901.9,496.9 L900.6,492.5 L896.9,497.5 L890,491.2 L896.2,500 L928.1,560 L933.8,567.5 L935,571.2 L965,567.5 L966.2,575 L918.8,633.8 L921.2,671.2 L921,700 L821,700 L821.2,671.2 L820,643.8 L805,622.5 L805,598.8 L791.2,598.8 L790,591.2 L780,590 L740,601.2 L706.2,563.8 L707.5,517.5 L710,517.5 L727.5,492.5 L746.2,468.1 L767.5,466.9 L785,459.4 L811.2,460 L812.5,474.4 L841.9,486.2 L848.8,478.1 L895,482.5 L900.6,462.5 L871.9,460 L865.6,446.9 L872.5,444.4 L876.2,441.9 L916.9,440 L916.9,434.4 L901.2,428.1 L901.2,420.6 L903.8,417.5 L891.9,420 L895.6,424.4 L892.5,426.9 L886.9,425.6 L885,421.9 L876.2,421.9 L870.6,437.5 L867.5,443.1 L865,445.6 L858.1,445.6 L853.8,449.4 L856.9,456.9 L852.5,461.2 L847.5,455 L850.6,452.5 L845,449.4 L841.2,445 L838.8,436.2 L822.5,424.4 L816.2,426.2 L836.9,445 L835,446.9 L831.9,448.8 L831.2,453.1 L828.1,453.8 L827.5,446.9 L808.8,428.1 L803.1,428.1 L802.5,435.6 L785.6,435.6 Z M743.8,388.8 L751.2,383.1 L759.4,385 L757.5,397.5 L748.8,397.5 L748.1,400.6 L744.4,400 Z M760.6,373.1 L766.9,372.5 L772.5,390 L781.2,393.1 L780.6,398.8 L760,404.4 L758.8,402.5 L763.8,397.5 L761.9,392.5 L764.4,385 L760.6,383.1 Z M811.9,378.8 L815,378.8 L816.2,381.9 L813.8,383.8 L811.2,381.9 Z M801.2,441.9 L806.9,441.2 L807.5,451.2 L801.9,451.9 Z M803.8,434.4 L807.5,433.8 L807.5,438.8 L803.8,440 Z M780,447.5 L784.4,445 L786.2,449.4 L782.5,451.9 Z M816.2,453.8 L825.2,453.1 L825.6,457.8 L818.1,458.8 Z M818.8,462.8 L826.6,462.5 L826.9,468.5 L820.4,468.1 Z M886.2,468.1 L892.5,465 L896.2,466.2 L892.5,471.2 L887.5,470.6 Z M1218.1,509.4 L1223.8,511.9 L1219.4,522.5 L1213.8,516.9 Z M1176.2,533.1 L1183.8,531.9 L1185,536.2 L1180,541.2 L1176.2,537.5 Z M1220.6,538.8 L1240,538.1 L1240,557.5 L1229.1,557.5 L1221.9,550.6 Z M1225,561.2 L1240,562.5 L1240,571.9 L1228.1,570.6 Z M1211.9,578.8 L1221.9,569.4 L1224.4,571.9 L1215,581.2 Z M1130.6,593.1 L1134.4,592.5 L1172.5,630 L1172.5,638.8 L1166.2,643.1 Z M1183.8,610 L1202.5,601.9 L1211.9,590 L1218.8,590 L1219.4,620 L1210,631.9 L1190,631.2 L1185,621.2 Z M1240,602.5 L1229.1,610 L1223.8,615 L1220.6,630.6 L1221.9,638.8 L1240,640 Z M938.1,421.9 L949.4,416.9 L955.6,420.6 L947.5,424.4 L948.1,431.9 L964.4,446.9 L963.1,460.6 L953.1,460.6 L940,436.2 Z M941.2,488.8 L947.5,488.1 L955,490 L967.5,503.1 L978.8,506.9 L976.2,510 L971.2,514.4 L963.8,512.5 L962.5,506.2 L958.8,505.6 L957.5,509.4 L947.5,493.8 Z M891.2,622 L896.2,615 L901.2,615.5 L896.2,622.5 Z" fill="none" stroke="#5fc9c2" stroke-width="3.6" stroke-linejoin="round" opacity=".26" filter="url(#gl)"/>
<path d="M765.6,461.2 L747.5,460.6 L741.9,453.8 L742.5,431.9 L768.8,431.2 L767.5,417.5 L760,413.8 L760.6,410.6 L767.5,409.4 L803.1,386.9 L801.9,381.9 L805,375 L808.8,374.4 L810,384.4 L823.8,386.9 L835,384.4 L843.8,385.6 L843.8,373.1 L848.1,371.9 L850,367.5 L862.5,365 L850,365.3 L842.5,358.8 L847.2,341.9 L830.3,359.7 L836.9,367.2 L820.9,381.3 L811.6,370 L797.5,371.9 L791.9,360.6 L837.8,325.9 L865,325 L897.8,335.3 L891.3,340 L874.4,340.9 L879.1,350.3 L921.3,332.1 L967.2,330.6 L962.5,317.5 L975.6,318.4 L982.2,340 L987.8,333.4 L980.3,323.1 L1020,302.5 L1065,302.5 L1070,314.5 L1120,314.5 L1127.5,321.2 L1147.5,321.2 L1155,315 L1180,318.8 L1188.8,325 L1229.5,326.2 L1250,326 L1250,368.8 L1229.5,368.8 L1211.2,369.5 L1208.8,386.2 L1223.8,388 L1229.5,393.8 L1250,394 L1250,470.6 L1229.1,470.6 L1225.6,470.6 L1220,456.9 L1213.1,453.1 L1210,447.5 L1205.6,451.9 L1201.2,450.6 L1196.2,441.9 L1189.4,448.8 L1195.6,458.1 L1207.5,456.2 L1200,466.9 L1217.5,495 L1207.5,518.8 L1178.1,528.8 L1176.2,525 L1168.1,530 L1167.5,537.5 L1182.5,554.4 L1183.1,570 L1168.1,580.6 L1165.6,573.1 L1149.4,560 L1146.9,574.4 L1152.5,582.5 L1168.1,609.4 L1165.6,613.1 L1152.5,600.6 L1149.4,588.8 L1140,580 L1140,558.8 L1133.1,546.9 L1130,549.4 L1125.6,547.5 L1123.1,536.2 L1104.4,520.6 L1073.8,550 L1072.5,572.5 L1061.2,578.8 L1043.8,532.5 L1040,523.8 L1032.5,528.8 L1028.8,525 L1031.2,521.9 L1018.8,511.2 L980,508.1 L993.8,521.2 L975,546.2 L935,563.1 L930,545 L901.9,496.9 L900.6,492.5 L896.9,497.5 L890,491.2 L896.2,500 L928.1,560 L933.8,567.5 L935,571.2 L965,567.5 L966.2,575 L918.8,633.8 L921.2,671.2 L921,700 L821,700 L821.2,671.2 L820,643.8 L805,622.5 L805,598.8 L791.2,598.8 L790,591.2 L780,590 L740,601.2 L706.2,563.8 L707.5,517.5 L710,517.5 L727.5,492.5 L746.2,468.1 L767.5,466.9 L785,459.4 L811.2,460 L812.5,474.4 L841.9,486.2 L848.8,478.1 L895,482.5 L900.6,462.5 L871.9,460 L865.6,446.9 L872.5,444.4 L876.2,441.9 L916.9,440 L916.9,434.4 L901.2,428.1 L901.2,420.6 L903.8,417.5 L891.9,420 L895.6,424.4 L892.5,426.9 L886.9,425.6 L885,421.9 L876.2,421.9 L870.6,437.5 L867.5,443.1 L865,445.6 L858.1,445.6 L853.8,449.4 L856.9,456.9 L852.5,461.2 L847.5,455 L850.6,452.5 L845,449.4 L841.2,445 L838.8,436.2 L822.5,424.4 L816.2,426.2 L836.9,445 L835,446.9 L831.9,448.8 L831.2,453.1 L828.1,453.8 L827.5,446.9 L808.8,428.1 L803.1,428.1 L802.5,435.6 L785.6,435.6 Z M743.8,388.8 L751.2,383.1 L759.4,385 L757.5,397.5 L748.8,397.5 L748.1,400.6 L744.4,400 Z M760.6,373.1 L766.9,372.5 L772.5,390 L781.2,393.1 L780.6,398.8 L760,404.4 L758.8,402.5 L763.8,397.5 L761.9,392.5 L764.4,385 L760.6,383.1 Z M811.9,378.8 L815,378.8 L816.2,381.9 L813.8,383.8 L811.2,381.9 Z M801.2,441.9 L806.9,441.2 L807.5,451.2 L801.9,451.9 Z M803.8,434.4 L807.5,433.8 L807.5,438.8 L803.8,440 Z M780,447.5 L784.4,445 L786.2,449.4 L782.5,451.9 Z M816.2,453.8 L825.2,453.1 L825.6,457.8 L818.1,458.8 Z M818.8,462.8 L826.6,462.5 L826.9,468.5 L820.4,468.1 Z M886.2,468.1 L892.5,465 L896.2,466.2 L892.5,471.2 L887.5,470.6 Z M1218.1,509.4 L1223.8,511.9 L1219.4,522.5 L1213.8,516.9 Z M1176.2,533.1 L1183.8,531.9 L1185,536.2 L1180,541.2 L1176.2,537.5 Z M1220.6,538.8 L1240,538.1 L1240,557.5 L1229.1,557.5 L1221.9,550.6 Z M1225,561.2 L1240,562.5 L1240,571.9 L1228.1,570.6 Z M1211.9,578.8 L1221.9,569.4 L1224.4,571.9 L1215,581.2 Z M1130.6,593.1 L1134.4,592.5 L1172.5,630 L1172.5,638.8 L1166.2,643.1 Z M1183.8,610 L1202.5,601.9 L1211.9,590 L1218.8,590 L1219.4,620 L1210,631.9 L1190,631.2 L1185,621.2 Z M1240,602.5 L1229.1,610 L1223.8,615 L1220.6,630.6 L1221.9,638.8 L1240,640 Z M938.1,421.9 L949.4,416.9 L955.6,420.6 L947.5,424.4 L948.1,431.9 L964.4,446.9 L963.1,460.6 L953.1,460.6 L940,436.2 Z M941.2,488.8 L947.5,488.1 L955,490 L967.5,503.1 L978.8,506.9 L976.2,510 L971.2,514.4 L963.8,512.5 L962.5,506.2 L958.8,505.6 L957.5,509.4 L947.5,493.8 Z M891.2,622 L896.2,615 L901.2,615.5 L896.2,622.5 Z" fill="none" stroke="#8ac7c2" stroke-width="2.1" stroke-linejoin="round"/>
<rect x="1150" y="667.5" width="80" height="2.5" fill="#1aa8a0"/>
</svg>
<div class="abs" style="left:514px;top:140.25px;width:1.4px;height:18.75px;background:#2aa39d"></div><svg class="abs" style="left:499.5px;top:144px" width="30" height="30" viewBox="-15 -15 30 30"><circle r="13.6" fill="#0a4744" opacity=".92"/><polygon points="7.97,4.60 0.00,9.20 -7.97,4.60 -7.97,-4.60 -0.00,-9.20 7.97,-4.60" fill="#27d6cd"/><polygon points="3.98,2.30 0.00,4.60 -3.98,2.30 -3.98,-2.30 -0.00,-4.60 3.98,-2.30" fill="#3fe3da" stroke="#0b5a57" stroke-width="1.7"/></svg><div class="iplabel" style="left:465px;top:123.5px;width:100px;height:16.75px">IP: 32.23.229.6</div>
<div class="abs" style="left:64.5px;top:265.5px;width:1.4px;height:19.75px;background:#2aa39d"></div><svg class="abs" style="left:50px;top:270.25px" width="30" height="30" viewBox="-15 -15 30 30"><circle r="13.6" fill="#0a4744" opacity=".92"/><polygon points="7.97,4.60 0.00,9.20 -7.97,4.60 -7.97,-4.60 -0.00,-9.20 7.97,-4.60" fill="#27d6cd"/><polygon points="3.98,2.30 0.00,4.60 -3.98,2.30 -3.98,-2.30 -0.00,-4.60 3.98,-2.30" fill="#3fe3da" stroke="#0b5a57" stroke-width="1.7"/></svg><div class="iplabel" style="left:15px;top:249.5px;width:99.5px;height:16px">IP: 9.48.1.233</div>
<div class="abs" style="left:114px;top:310.75px;width:1.4px;height:19.5px;background:#2aa39d"></div><svg class="abs" style="left:99.5px;top:315.25px" width="30" height="30" viewBox="-15 -15 30 30"><circle r="13.6" fill="#0a4744" opacity=".92"/><polygon points="7.97,4.60 0.00,9.20 -7.97,4.60 -7.97,-4.60 -0.00,-9.20 7.97,-4.60" fill="#27d6cd"/><polygon points="3.98,2.30 0.00,4.60 -3.98,2.30 -3.98,-2.30 -0.00,-4.60 3.98,-2.30" fill="#3fe3da" stroke="#0b5a57" stroke-width="1.7"/></svg><div class="iplabel" style="left:64.5px;top:294.5px;width:99.25px;height:16.25px">IP: 220.29.67.37</div>
<div class="abs" style="left:409px;top:286px;width:1.4px;height:19.25px;background:#2aa39d"></div><svg class="abs" style="left:394.5px;top:290.25px" width="30" height="30" viewBox="-15 -15 30 30"><circle r="13.6" fill="#0a4744" opacity=".92"/><polygon points="7.97,4.60 0.00,9.20 -7.97,4.60 -7.97,-4.60 -0.00,-9.20 7.97,-4.60" fill="#27d6cd"/><polygon points="3.98,2.30 0.00,4.60 -3.98,2.30 -3.98,-2.30 -0.00,-4.60 3.98,-2.30" fill="#3fe3da" stroke="#0b5a57" stroke-width="1.7"/></svg><div class="iplabel" style="left:359.5px;top:269.75px;width:99.5px;height:16.25px">IP: 199.150.134.247</div>
</div>
<div class="win" style="left:232px;top:54.5px;width:544px;height:309.5px;background:#4b4b4b">
<div class="tb red" style="letter-spacing:-.71px">ssh - 194.85.245.171@500007<div class="ctl"><i class="mi"></i><i class="mx"></i><i class="cl">X</i></div></div>
<div class="term" style="left:11px;top:34.5px;width:521px;height:265px">kuro@test:~$ nmap 194.85.245.171

Starting nmap v1.0 at 2018-11-28 01:37:11
Interesting ports on 194.85.245.171

PORT  STATE  SERVICE  VERSION
22    open   ssh      1.0

kuro@test:~$ sshnuke
<b>Usage: sshnuke [ip address] [(opt) -port=newport] [-rootpw=new password]</b>
kuro@test:~$ sshnuke 194.85.245.171 -rootpw=Z1ON0101
sshnuke:
Connecting to 194.85.245.171 :ssh ...succesful.
Attempting to exploit SSHv1 CRC32 ...succesful.
Reseting root password to "Z1ON0101".
System open.
kuro@test:~$ ssh root@Z1ON0101 194.85.245.171
Connecting...
root@500007:/root# FileExplorer.exe
root@500007:/root# <span class="cur"></span></div>
</div>
<div id="topbar">
<svg class="abs" style="left:2px;top:1px" width="26" height="20" viewBox="0 0 26 20"><ellipse cx="4.3" cy="3.5" rx="3.2" ry="2.5" fill="#e9e9e9"/><ellipse cx="12.2" cy="3.5" rx="3.2" ry="2.5" fill="#e9e9e9"/><ellipse cx="20" cy="3.5" rx="3.2" ry="2.5" fill="#e9e9e9"/><ellipse cx="4.3" cy="10" rx="3.2" ry="2.5" fill="#e9e9e9"/><ellipse cx="12.2" cy="10" rx="3.2" ry="2.5" fill="#e9e9e9"/><ellipse cx="20" cy="10" rx="3.2" ry="2.5" fill="#e9e9e9"/><ellipse cx="4.3" cy="16.5" rx="3.2" ry="2.5" fill="#e9e9e9"/><ellipse cx="12.2" cy="16.5" rx="3.2" ry="2.5" fill="#e9e9e9"/><ellipse cx="20" cy="16.5" rx="3.2" ry="2.5" fill="#e9e9e9"/></svg>
<div id="clock">Wed 04:41</div>
<svg class="abs" style="left:1110px;top:0" width="132" height="22" viewBox="1110 0 132 22">
<rect x="1114.5" y="5.5" width="10.8" height="13" rx="1" fill="#17a99e"/>
<circle cx="1141.7" cy="11.7" r="6.9" fill="#17a99e"/><path d="M1141.7,11.7 V4.8 A6.9,6.9 0 0 1 1148.6,11.7 Z" fill="#0e8c84"/>
<path d="M1158.3,6.3 H1162 L1164.6,3.8 L1167.2,6.3 H1170.9 V17.9 H1158.3 Z" fill="#f4f4f4"/>
<path d="M1161,11.2 H1166.5 M1161,14.3 H1168.2" stroke="#0a333e" stroke-width="1.5"/>
<path d="M1182,4.8 H1194 Q1195.8,4.8 1195.8,6.6 V12.8 Q1195.8,14.6 1194,14.6 H1189 L1185.5,18 V14.6 H1182 Q1180.2,14.6 1180.2,12.8 V6.6 Q1180.2,4.8 1182,4.8 Z" fill="#f0f0f0"/>
<g fill="none" stroke="#f4f4f4" stroke-width="1.7" stroke-linecap="round"><path d="M1205,9.6 Q1211.7,3.4 1218.4,9.6"/><path d="M1207.5,12.2 Q1211.7,8.4 1215.9,12.2"/><path d="M1209.9,14.6 Q1211.7,13 1213.5,14.6"/></g>
<circle cx="1211.7" cy="16.2" r="1.1" fill="#f4f4f4"/>
<circle cx="1234.4" cy="11.3" r="6.3" fill="#5d5d8a"/><circle cx="1234.4" cy="9" r="2.7" fill="#efefef"/><path d="M1230.3,15.5 Q1234.4,9.5 1238.5,15.5 Q1234.4,18.6 1230.3,15.5Z" fill="#efefef"/>
</svg>
<div id="user">kuro</div>
</div>
<div id="taskbar">
<div class="task" style="left:3px">Map.exe</div>
<div class="task act" style="left:134.3px">ssh -</div>
<div class="task" style="left:265.6px">FileExplorer.exe@500007</div>
<div class="task" style="left:396.9px">Terminal.exe</div>
<div class="task" style="left:528.2px">FileExplorer.exe</div>
</div>
<svg class="abs" style="left:1020px;top:610px;z-index:60" width="260" height="110" viewBox="1020 610 260 110"><defs><filter id="br" x="-5%" y="-5%" width="110%" height="110%"><feTurbulence type="fractalNoise" baseFrequency="0.035 0.09" numOctaves="2" seed="4" result="n"/><feDisplacementMap in="SourceGraphic" in2="n" scale="5" xChannelSelector="R" yChannelSelector="G"/></filter></defs><g filter="url(#br)" font-family="'Liberation Sans',sans-serif" font-weight="bold" font-style="italic" fill="#e2392c" stroke="#e2392c" stroke-width="4" stroke-linejoin="round"><svg x="1037" y="632" width="53" height="84" viewBox="7 -72 79 75" preserveAspectRatio="none" overflow="visible"><text transform="skewX(-10)" font-size="100">G</text></svg><svg x="1087" y="630" width="73" height="71" viewBox="-7 -71 93 73" preserveAspectRatio="none" overflow="visible"><text transform="skewX(-10)" font-size="100">X</text></svg><svg x="1147" y="632" width="91" height="63" viewBox="0 -71 99 73" preserveAspectRatio="none" overflow="visible"><text transform="skewX(-10)" font-size="100">M</text></svg></g></svg>
</body></html>
